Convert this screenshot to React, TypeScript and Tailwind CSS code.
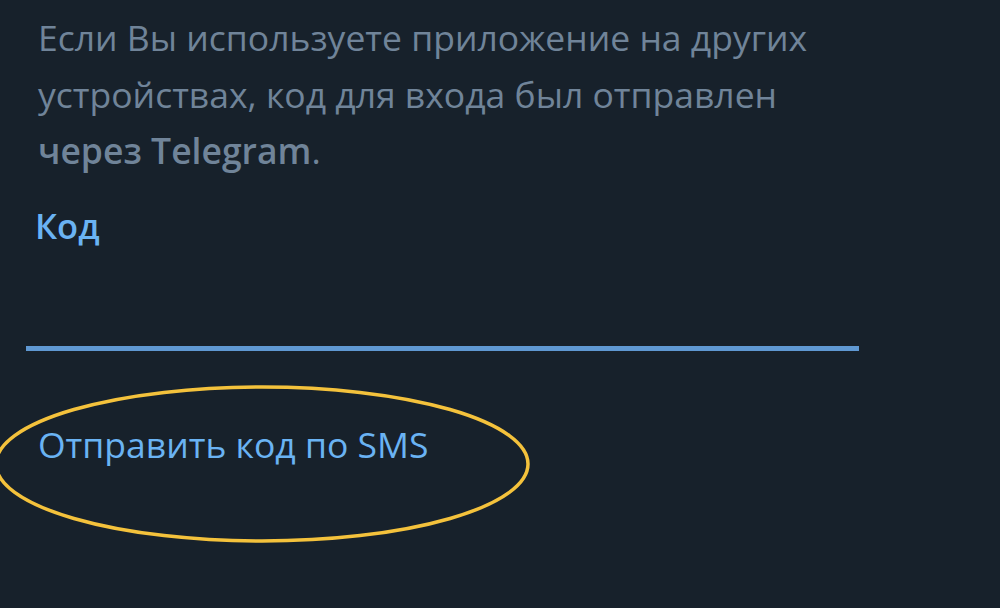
export default function App() {
  return (
    <div
      className="relative w-[1000px] h-[608px] overflow-hidden bg-[#17212b]"
      style={{ fontFamily: '"Open Sans", "Noto Sans", sans-serif' }}
    >
      <div className="pl-[38px] pt-[9px]">
        <p className="w-[840px] text-[35.5px] leading-[56.5px] text-[#708499]">
          Если Вы используете приложение на других устройствах, код для входа был отправлен{' '}
          <span className="font-semibold">через Telegram</span>.
        </p>
      </div>

      {/* Code field */}
      <div className="pl-[26px] pt-[25px]">
        <div className="pl-[9px] text-[34.5px] leading-[44px] font-semibold text-[#6ab3f3]">Код</div>
        <div className="w-[833px] h-[103px] border-b-[5px] border-[#5f98d2]" />
      </div>

      {/* Send via SMS */}
      <div className="pl-[38px] pt-[71px]">
        <button className="text-[35.5px] leading-[44px] text-[#6ab3f3]">Отправить код по SMS</button>
      </div>

      {/* annotation ellipse */}
      <svg className="absolute left-0 top-0 pointer-events-none" width="1000" height="608">
        <ellipse cx="262" cy="464" rx="266" ry="77" fill="none" stroke="#f4c23c" strokeWidth="3.5" />
      </svg>
    </div>
  )
}
